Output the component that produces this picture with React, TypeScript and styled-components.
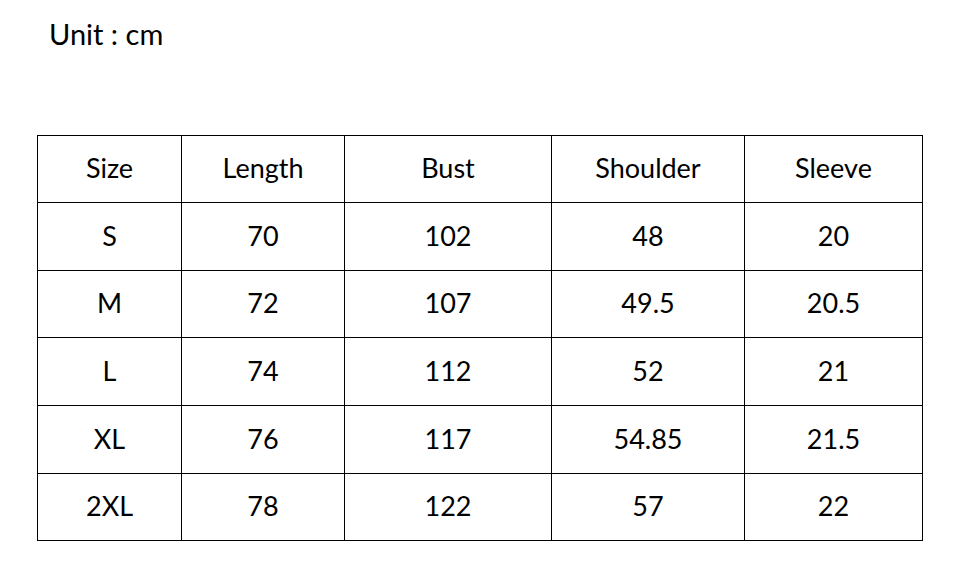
import React from "react";
import styled, { createGlobalStyle } from "styled-components";

const Global = createGlobalStyle`
  html, body { margin: 0; padding: 0; background: #fff; }
  body { font-family: Lato, "Open Sans", sans-serif; color: #000; }
`;

const Page = styled.div`
  width: 955px;
  height: 580px;
  box-sizing: border-box;
  padding: 15px 0 0 37px;
`;

const Title = styled.div`
  font-size: 29px;
  line-height: 38px;
  padding-left: 12px;
  height: 120px;
`;

const Table = styled.table`
  border-collapse: collapse;
  table-layout: fixed;
`;

const Cell = styled.td<{ $w?: number; $h: number }>`
  border: 1px solid #000;
  padding: 0 0 3px;
  height: ${(p) => p.$h - 3}px;
  text-align: center;
  vertical-align: middle;
  font-size: 27px;
  line-height: 1;
  ${(p) => (p.$w ? `width: ${p.$w}px;` : "")}
`;

const widths = [143, 162, 206, 192, 177];
const heights = [66, 67, 66, 67, 67, 66];
const header = ["Size", "Length", "Bust", "Shoulder", "Sleeve"];
const rows = [
  ["S", "70", "102", "48", "20"],
  ["M", "72", "107", "49.5", "20.5"],
  ["L", "74", "112", "52", "21"],
  ["XL", "76", "117", "54.85", "21.5"],
  ["2XL", "78", "122", "57", "22"],
];

export default function App() {
  return (
    <Page>
      <Global />
      <Title>Unit : cm</Title>
      <Table>
        <tbody>
          <tr>
            {header.map((h, i) => (
              <Cell key={h} $w={widths[i]} $h={heights[0]}>{h}</Cell>
            ))}
          </tr>
          {rows.map((r, ri) => (
            <tr key={r[0]}>
              {r.map((c, i) => (
                <Cell key={i} $h={heights[ri + 1]}>{c}</Cell>
              ))}
            </tr>
          ))}
        </tbody>
      </Table>
    </Page>
  );
}
